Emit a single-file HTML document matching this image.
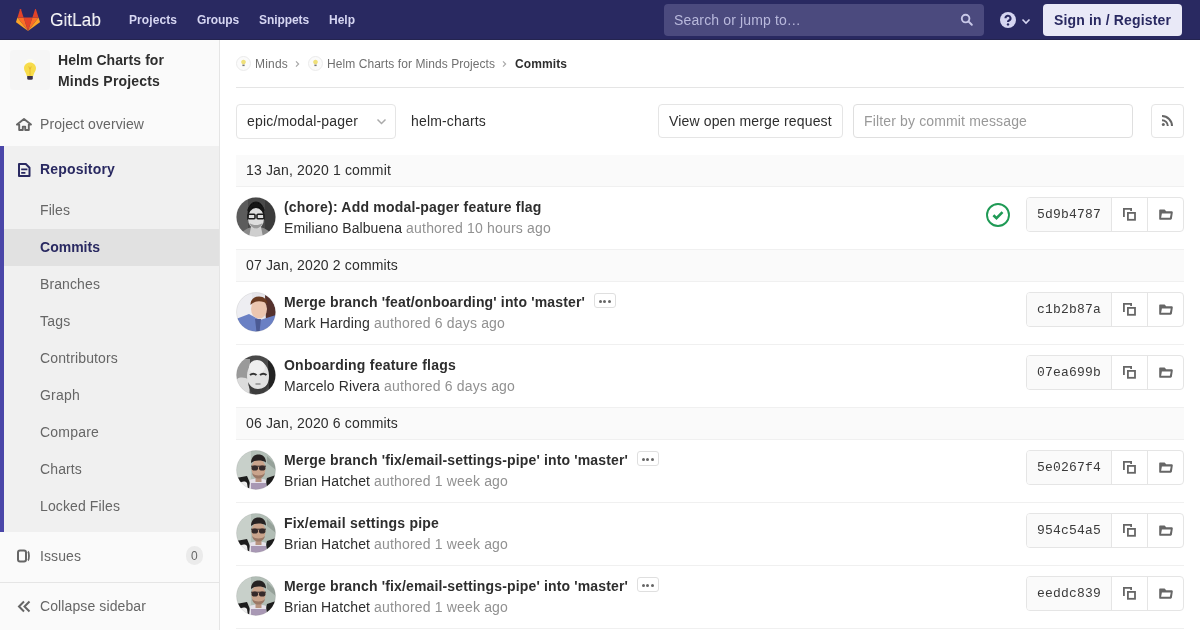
<!DOCTYPE html>
<html><head><meta charset="utf-8">
<style>
*{box-sizing:border-box;margin:0;padding:0}
html,body{width:1200px;height:630px;overflow:hidden;background:#fff;font-family:"Liberation Sans",sans-serif;font-size:14px;color:#2e2e2e}
.t{position:absolute;white-space:nowrap;will-change:transform}
.b{position:absolute}
</style></head><body>

<div class="b" style="left:0;top:0;width:1200px;height:40px;background:#292961"></div>
<div class="b" style="left:0;top:39px;width:1200px;height:1px;background:#24244f"></div>
<svg class="b" style="left:16px;top:9px" width="24" height="22" viewBox="0 0 36 33">
<path fill="#e24329" d="M18 33l6.6-20.3H11.4z"/>
<path fill="#fc6d26" d="M18 33l-6.6-20.3H2.2z"/>
<path fill="#fca326" d="M2.2 12.7L.2 18.9a1.4 1.4 0 0 0 .5 1.5L18 33z"/>
<path fill="#e24329" d="M2.2 12.7h9.2L7.4.4a.7.7 0 0 0-1.3 0z"/>
<path fill="#fc6d26" d="M18 33l6.6-20.3h9.2z"/>
<path fill="#fca326" d="M33.8 12.7l2 6.2a1.4 1.4 0 0 1-.5 1.5L18 33z"/>
<path fill="#e24329" d="M33.8 12.7h-9.2l4-12.3a.7.7 0 0 1 1.3 0z"/>
</svg>
<div class="t" style="left:50px;top:9.5px;font-size:19px;line-height:19px;color:#fff;transform:scaleX(0.91);transform-origin:0 0">GitLab</div>
<div class="t" style="left:129px;top:14px;font-size:12px;line-height:12px;font-weight:bold;color:#d6d6f2;letter-spacing:0.081px;font-family:'Liberation Sans',sans-serif;">Projects</div>
<div class="t" style="left:197px;top:14px;font-size:12px;line-height:12px;font-weight:bold;color:#d6d6f2;letter-spacing:-0.111px;font-family:'Liberation Sans',sans-serif;">Groups</div>
<div class="t" style="left:259px;top:14px;font-size:12px;line-height:12px;font-weight:bold;color:#d6d6f2;letter-spacing:-0.084px;font-family:'Liberation Sans',sans-serif;">Snippets</div>
<div class="t" style="left:329px;top:14px;font-size:12px;line-height:12px;font-weight:bold;color:#d6d6f2;letter-spacing:-0.001px;font-family:'Liberation Sans',sans-serif;">Help</div>
<div class="b" style="left:664px;top:4px;width:320px;height:32px;background:#4b4a7e;border-radius:4px"></div>
<div class="t" style="left:674px;top:13px;font-size:14px;line-height:14px;color:#b9b9dc;letter-spacing:0.139px;font-family:'Liberation Sans',sans-serif;">Search or jump to…</div>
<svg class="b" style="left:960px;top:13px" width="14" height="14" viewBox="0 0 14 14"><circle cx="5.6" cy="5.6" r="3.8" fill="none" stroke="#c8c8e8" stroke-width="1.9"/><path d="M8.4 8.4l3.4 3.4" stroke="#c8c8e8" stroke-width="2" stroke-linecap="round"/></svg>
<svg class="b" style="left:1000px;top:12px" width="16" height="16" viewBox="0 0 16 16"><circle cx="8" cy="8" r="8" fill="#d6d6f2"/><path d="M5.5 6.3a2.5 2.5 0 1 1 3.5 2.2c-.7.4-1 .7-1 1.6" fill="none" stroke="#292961" stroke-width="2.1"/><circle cx="8" cy="12.4" r="1.2" fill="#292961"/></svg>
<svg class="b" style="left:1020.5px;top:17.5px" width="10" height="7" viewBox="0 0 10 7"><path d="M1.5 1.5l3.5 3.5 3.5-3.5" fill="none" stroke="#d6d6f2" stroke-width="1.6"/></svg>
<div class="b" style="left:1043px;top:4px;width:139px;height:32px;background:#e9e9f7;border-radius:4px"></div>
<div class="t" style="left:1054px;top:13px;font-size:14px;line-height:14px;font-weight:bold;color:#292961;letter-spacing:0.147px;font-family:'Liberation Sans',sans-serif;">Sign in / Register</div>
<div class="b" style="left:0;top:40px;width:220px;height:590px;background:#fafafa;border-right:1px solid #e5e5e5"></div>
<div class="b" style="left:10px;top:50px;width:40px;height:40px;background:#f6f6f6;border-radius:4px"></div>
<svg class="b" style="left:22px;top:58px" width="16" height="24" viewBox="0 0 16 24"><ellipse cx="8" cy="4" rx="5" ry="3" fill="#fdfdf0"/><path d="M8 4.5C4.6 4.5 2 7 2 10.2c0 2.6 1.7 4 2.4 6.5l.4 1.3h6.4l.4-1.3c.7-2.5 2.4-3.9 2.4-6.5C14 7 11.4 4.5 8 4.5z" fill="#f7dc4a"/><path d="M6.8 8.5l1.2 3 1.2-3M8 11.5v6" stroke="#e8b830" stroke-width="1" fill="none"/><path d="M5.2 18h5.6v2.6c0 .8-.6 1.2-1.3 1.2H6.5c-.7 0-1.3-.4-1.3-1.2z" fill="#3a3248"/></svg>
<div class="t" style="left:58px;top:53px;font-size:14px;line-height:14px;font-weight:bold;color:#2e2e2e;letter-spacing:0.065px;font-family:'Liberation Sans',sans-serif;">Helm Charts for</div>
<div class="t" style="left:58px;top:74px;font-size:14px;line-height:14px;font-weight:bold;color:#2e2e2e;letter-spacing:0.173px;font-family:'Liberation Sans',sans-serif;">Minds Projects</div>
<svg class="b" style="left:16px;top:118px" width="16" height="13" viewBox="0 0 16 13"><path d="M8 1L1 6.6h2.2V12h3.6V8.6h2.4V12h3.6V6.6H15z" fill="none" stroke="#666" stroke-width="1.9" stroke-linejoin="round"/></svg>
<div class="t" style="left:40px;top:117px;font-size:14px;line-height:14px;color:#666;letter-spacing:0.081px;font-family:'Liberation Sans',sans-serif;">Project overview</div>
<div class="b" style="left:0;top:146px;width:219px;height:386px;background:#f0f0f0"></div>
<div class="b" style="left:0;top:146px;width:4px;height:386px;background:#4a46a8"></div>
<div class="b" style="left:4px;top:229px;width:215px;height:37px;background:#e1e1e1"></div>
<svg class="b" style="left:18px;top:163px" width="13" height="14" viewBox="0 0 13 14"><path d="M1 1h6.8L11.5 4.7V13H1z" fill="none" stroke="#292961" stroke-width="2" stroke-linejoin="round"/><path d="M3.2 6.4h6.2M3.2 9.8h4.2" stroke="#292961" stroke-width="1.8"/></svg>
<div class="t" style="left:40px;top:162px;font-size:14px;line-height:14px;font-weight:bold;color:#292961;letter-spacing:0.188px;font-family:'Liberation Sans',sans-serif;">Repository</div>
<div class="t" style="left:40px;top:203px;font-size:14px;line-height:14px;color:#666;letter-spacing:0.088px;font-family:'Liberation Sans',sans-serif;">Files</div>
<div class="t" style="left:40px;top:240px;font-size:14px;line-height:14px;font-weight:bold;color:#292961;letter-spacing:0.015px;font-family:'Liberation Sans',sans-serif;">Commits</div>
<div class="t" style="left:40px;top:277px;font-size:14px;line-height:14px;color:#666;letter-spacing:0.107px;font-family:'Liberation Sans',sans-serif;">Branches</div>
<div class="t" style="left:40px;top:314px;font-size:14px;line-height:14px;color:#666;letter-spacing:0.219px;font-family:'Liberation Sans',sans-serif;">Tags</div>
<div class="t" style="left:40px;top:351px;font-size:14px;line-height:14px;color:#666;letter-spacing:0.145px;font-family:'Liberation Sans',sans-serif;">Contributors</div>
<div class="t" style="left:40px;top:388px;font-size:14px;line-height:14px;color:#666;letter-spacing:0.218px;font-family:'Liberation Sans',sans-serif;">Graph</div>
<div class="t" style="left:40px;top:425px;font-size:14px;line-height:14px;color:#666;letter-spacing:0.203px;font-family:'Liberation Sans',sans-serif;">Compare</div>
<div class="t" style="left:40px;top:462px;font-size:14px;line-height:14px;color:#666;letter-spacing:0.128px;font-family:'Liberation Sans',sans-serif;">Charts</div>
<div class="t" style="left:40px;top:499px;font-size:14px;line-height:14px;color:#666;letter-spacing:0.117px;font-family:'Liberation Sans',sans-serif;">Locked Files</div>
<svg class="b" style="left:17px;top:549px" width="14" height="14" viewBox="0 0 14 14"><rect x="1" y="1.5" width="8" height="11" rx="2" fill="none" stroke="#666" stroke-width="2"/><path d="M11 2.5c1.3 1.2 1.3 7.8 0 9" fill="none" stroke="#666" stroke-width="1.8"/></svg>
<div class="t" style="left:40px;top:549px;font-size:14px;line-height:14px;color:#666;letter-spacing:0.090px;font-family:'Liberation Sans',sans-serif;">Issues</div>
<div class="b" style="left:186px;top:546px;width:17px;height:19px;background:#ebebeb;border-radius:9px"></div>
<div class="t" style="left:191px;top:550px;font-size:12px;line-height:12px;color:#666;letter-spacing:0.326px;font-family:'Liberation Sans',sans-serif;">0</div>
<div class="b" style="left:0;top:582px;width:219px;height:1px;background:#e5e5e5"></div>
<svg class="b" style="left:17px;top:600px" width="14" height="13" viewBox="0 0 14 13"><path d="M7 1.5L2 6.5l5 5M12.5 1.5l-5 5 5 5" fill="none" stroke="#666" stroke-width="2"/></svg>
<div class="t" style="left:40px;top:599px;font-size:14px;line-height:14px;color:#666;letter-spacing:0.107px;font-family:'Liberation Sans',sans-serif;">Collapse sidebar</div>
<svg class="b" style="left:236px;top:56px" width="15" height="15" viewBox="0 0 15 15"><circle cx="7.5" cy="7.5" r="7" fill="#fbfbfb" stroke="#ebebeb" stroke-width="1"/><path d="M7.5 3.8c-1.4 0-2.3 1-2.3 2.1 0 1 .7 1.5 1 2.4h2.6c.3-.9 1-1.4 1-2.4 0-1.1-.9-2.1-2.3-2.1z" fill="#efe07a"/><path d="M6.4 8.6h2.2v1.5H6.4z" fill="#777"/></svg>
<div class="t" style="left:255px;top:58px;font-size:12px;line-height:12px;color:#707070;letter-spacing:0.198px;font-family:'Liberation Sans',sans-serif;">Minds</div>
<svg class="b" style="left:294px;top:60px" width="7" height="8" viewBox="0 0 7 8"><path d="M2 1.4l2.6 2.6-2.6 2.6" fill="none" stroke="#a8a8a8" stroke-width="1.2"/></svg>
<svg class="b" style="left:308px;top:56px" width="15" height="15" viewBox="0 0 15 15"><circle cx="7.5" cy="7.5" r="7" fill="#fbfbfb" stroke="#ebebeb" stroke-width="1"/><path d="M7.5 3.8c-1.4 0-2.3 1-2.3 2.1 0 1 .7 1.5 1 2.4h2.6c.3-.9 1-1.4 1-2.4 0-1.1-.9-2.1-2.3-2.1z" fill="#efe07a"/><path d="M6.4 8.6h2.2v1.5H6.4z" fill="#777"/></svg>
<div class="t" style="left:327px;top:58px;font-size:12px;line-height:12px;color:#707070;letter-spacing:0.065px;font-family:'Liberation Sans',sans-serif;">Helm Charts for Minds Projects</div>
<svg class="b" style="left:501px;top:60px" width="7" height="8" viewBox="0 0 7 8"><path d="M2 1.4l2.6 2.6-2.6 2.6" fill="none" stroke="#a8a8a8" stroke-width="1.2"/></svg>
<div class="t" style="left:515px;top:58px;font-size:12px;line-height:12px;font-weight:bold;color:#2e2e2e;letter-spacing:0.094px;font-family:'Liberation Sans',sans-serif;">Commits</div>
<div class="b" style="left:236px;top:87px;width:948px;height:1px;background:#e5e5e5"></div>
<div class="b" style="left:236px;top:104px;width:160px;height:35px;border:1px solid #e5e5e5;border-radius:4px;background:#fff"></div>
<div class="t" style="left:247px;top:114px;font-size:14px;line-height:14px;color:#2e2e2e;letter-spacing:0.177px;font-family:'Liberation Sans',sans-serif;">epic/modal-pager</div>
<svg class="b" style="left:376px;top:118px" width="11" height="8" viewBox="0 0 11 8"><path d="M1.5 1.5l4 4 4-4" fill="none" stroke="#aaa" stroke-width="1.5"/></svg>
<div class="t" style="left:411px;top:114px;font-size:14px;line-height:14px;color:#2e2e2e;letter-spacing:0.170px;font-family:'Liberation Sans',sans-serif;">helm-charts</div>
<div class="b" style="left:658px;top:104px;width:185px;height:34px;border:1px solid #e5e5e5;border-radius:4px;background:#fff"></div>
<div class="t" style="left:669px;top:114px;font-size:14px;line-height:14px;color:#2e2e2e;letter-spacing:0.151px;font-family:'Liberation Sans',sans-serif;">View open merge request</div>
<div class="b" style="left:853px;top:104px;width:280px;height:34px;border:1px solid #dfdfdf;border-radius:4px;background:#fff"></div>
<div class="t" style="left:864px;top:114px;font-size:14px;line-height:14px;color:#999;letter-spacing:0.147px;font-family:'Liberation Sans',sans-serif;">Filter by commit message</div>
<div class="b" style="left:1151px;top:104px;width:33px;height:34px;border:1px solid #e5e5e5;border-radius:4px;background:#fff"></div>
<svg class="b" style="left:1161px;top:115px" width="12" height="12" viewBox="0 0 12 12"><circle cx="2.3" cy="9.6" r="1.5" fill="#666"/><path d="M1 5.2a5.8 5.8 0 0 1 5.8 5.8M1 1a10 10 0 0 1 10 10" fill="none" stroke="#666" stroke-width="2"/></svg>
<div class="b" style="left:236px;top:155px;width:948px;height:32px;background:#fafafa;border-bottom:1px solid #f0f0f0"></div><div class="t" style="left:246px;top:163px;font-size:14px;line-height:14px;color:#2e2e2e;letter-spacing:0.160px;font-family:'Liberation Sans',sans-serif;">13 Jan, 2020 1 commit</div>
<div class="b" style="left:236px;top:249px;width:948px;height:1px;background:#f0f0f0"></div><svg class="b" style="left:236px;top:197px" width="40" height="40" viewBox="0 0 40 40"><defs><clipPath id="c236_197"><circle cx="20" cy="20" r="19.5"/></clipPath><filter id="fc236_197"><feGaussianBlur stdDeviation="0.7"/></filter></defs><g clip-path="url(#c236_197)"><g filter="url(#fc236_197)"><rect width="40" height="40" fill="#4a4a4a"/><rect x="0" y="0" width="12" height="40" fill="#5c5c5c"/><rect x="29" y="0" width="11" height="40" fill="#3a3a3a"/><path d="M4 40c2-7 8-10 16-10s14 3 16 10z" fill="#8a8a8a"/><path d="M15 30h10l2 10H13z" fill="#cfcfcf"/><path d="M11.5 18c0-9 4-13.5 8.5-13.5s8.5 4.5 8.5 13.5v5h-17z" fill="#141414"/><ellipse cx="20" cy="21.5" rx="8" ry="10.5" fill="#dedede"/><path d="M11 14c2-6.5 5.5-8.5 9-8.5s7 2 9 8.5c-2.5-2.5-5.5-3.5-9-3.5s-6.5 1-9 3.5z" fill="#121212"/><rect x="12" y="17.2" width="7" height="4.6" rx="1" fill="none" stroke="#1e1e1e" stroke-width="1.6"/><rect x="21" y="17.2" width="7" height="4.6" rx="1" fill="none" stroke="#1e1e1e" stroke-width="1.6"/><path d="M13.5 26c1.5 4 4 5.5 6.5 5.5s5-1.5 6.5-5.5c-2 1.5-4 2-6.5 2s-4.5-.5-6.5-2z" fill="#9a9a9a"/></g></g><circle cx="20" cy="20" r="19.5" fill="none" stroke="rgba(0,0,0,.08)"/></svg><div class="t" style="left:284px;top:200px;font-size:14px;line-height:14px;font-weight:bold;color:#2e2e2e;letter-spacing:0.204px;font-family:'Liberation Sans',sans-serif;">(chore): Add modal-pager feature flag</div><div class="t" style="left:284px;top:221px;font-size:14px;line-height:14px"><span style="letter-spacing:0.074px;color:#2e2e2e;">Emiliano Balbuena</span><span style="letter-spacing:0.192px;color:#919191;"> authored 10 hours ago</span></div><svg class="b" style="left:986px;top:203px" width="24" height="24" viewBox="0 0 24 24"><circle cx="12" cy="12" r="11" fill="none" stroke="#1f9a55" stroke-width="1.9"/><path d="M7.4 12.2l3.1 3 6-6" fill="none" stroke="#1f9a55" stroke-width="2.6"/></svg><div class="b" style="left:1026px;top:197px;width:158px;height:35px;border:1px solid #e5e5e5;border-radius:4px;background:#fff;overflow:hidden"><div class="b" style="left:0;top:0;width:85px;height:33px;background:#fafafa;border-right:1px solid #e5e5e5"></div><div class="b" style="left:120px;top:0;width:1px;height:33px;background:#e5e5e5"></div></div><div class="t" style="left:1037px;top:208px;font-size:13px;line-height:13px;color:#3a3a3a;letter-spacing:0.199px;font-family:'Liberation Mono',monospace;">5d9b4787</div><svg class="b" style="left:1123px;top:208px" width="14" height="14" viewBox="0 0 14 14"><path d="M0.9 9V0.9H8.1V3" fill="none" stroke="#666" stroke-width="1.8"/><rect x="4.9" y="4.9" width="7.1" height="6.9" fill="none" stroke="#666" stroke-width="1.8"/></svg><svg class="b" style="left:1159px;top:209px" width="14" height="11" viewBox="0 0 14 11"><path d="M1.2 0.4H5.6L7.2 2.3H12.6C13.4 2.3 13.9 2.9 13.8 3.6L12.9 9.6C12.8 10.3 12.3 10.7 11.6 10.7H1.2C0.6 10.7 0.2 10.3 0.2 9.7V1.4C0.2 0.8 0.6 0.4 1.2 0.4z" fill="#666"/><path d="M2.9 4.5H11.7L10.9 8.8H2.1z" fill="#fff"/></svg>
<div class="b" style="left:236px;top:250px;width:948px;height:32px;background:#fafafa;border-bottom:1px solid #f0f0f0"></div><div class="t" style="left:246px;top:258px;font-size:14px;line-height:14px;color:#2e2e2e;letter-spacing:0.153px;font-family:'Liberation Sans',sans-serif;">07 Jan, 2020 2 commits</div>
<div class="b" style="left:236px;top:344px;width:948px;height:1px;background:#f0f0f0"></div><svg class="b" style="left:236px;top:292px" width="40" height="40" viewBox="0 0 40 40"><defs><clipPath id="c236_292"><circle cx="20" cy="20" r="19.5"/></clipPath><filter id="fc236_292"><feGaussianBlur stdDeviation="0.7"/></filter></defs><g clip-path="url(#c236_292)"><g filter="url(#fc236_292)"><rect width="40" height="40" fill="#e6e5ea"/><rect x="0" y="0" width="16" height="40" fill="#eeeef2"/><path d="M29 3c6 3 10 9 11 17v14l-10-4z" fill="#54302e"/><path d="M0 27l13-5 11 6 16-5v17H0z" fill="#6b80c4"/><path d="M19 27h6l-1.5 13h-3z" fill="#4c5a94"/><ellipse cx="23" cy="17" rx="8" ry="9.5" fill="#ebc6b0"/><path d="M14.5 13c0-5.5 3.5-8.5 8.5-8.5s8.5 3 8.5 8c-2.2-2.2-5.2-3.2-8.5-3.2s-6.3 1.4-8.5 3.7z" fill="#6a3a22"/></g></g><circle cx="20" cy="20" r="19.5" fill="none" stroke="rgba(0,0,0,.08)"/></svg><div class="t" style="left:284px;top:295px;font-size:14px;line-height:14px;font-weight:bold;color:#2e2e2e;letter-spacing:0.156px;font-family:'Liberation Sans',sans-serif;">Merge branch &#x27;feat/onboarding&#x27; into &#x27;master&#x27;</div><div class="t" style="left:284px;top:316px;font-size:14px;line-height:14px"><span style="letter-spacing:0.164px;color:#2e2e2e;">Mark Harding</span><span style="letter-spacing:0.173px;color:#919191;"> authored 6 days ago</span></div><div class="b" style="left:594px;top:293px;width:22px;height:15px;border:1px solid #dfdfdf;border-radius:3px;background:#fff"></div><div class="b" style="left:598.5px;top:299.5px;width:3px;height:3px;border-radius:50%;background:#666"></div><div class="b" style="left:603.0px;top:299.5px;width:3px;height:3px;border-radius:50%;background:#666"></div><div class="b" style="left:607.5px;top:299.5px;width:3px;height:3px;border-radius:50%;background:#666"></div><div class="b" style="left:1026px;top:292px;width:158px;height:35px;border:1px solid #e5e5e5;border-radius:4px;background:#fff;overflow:hidden"><div class="b" style="left:0;top:0;width:85px;height:33px;background:#fafafa;border-right:1px solid #e5e5e5"></div><div class="b" style="left:120px;top:0;width:1px;height:33px;background:#e5e5e5"></div></div><div class="t" style="left:1037px;top:303px;font-size:13px;line-height:13px;color:#3a3a3a;letter-spacing:0.199px;font-family:'Liberation Mono',monospace;">c1b2b87a</div><svg class="b" style="left:1123px;top:303px" width="14" height="14" viewBox="0 0 14 14"><path d="M0.9 9V0.9H8.1V3" fill="none" stroke="#666" stroke-width="1.8"/><rect x="4.9" y="4.9" width="7.1" height="6.9" fill="none" stroke="#666" stroke-width="1.8"/></svg><svg class="b" style="left:1159px;top:304px" width="14" height="11" viewBox="0 0 14 11"><path d="M1.2 0.4H5.6L7.2 2.3H12.6C13.4 2.3 13.9 2.9 13.8 3.6L12.9 9.6C12.8 10.3 12.3 10.7 11.6 10.7H1.2C0.6 10.7 0.2 10.3 0.2 9.7V1.4C0.2 0.8 0.6 0.4 1.2 0.4z" fill="#666"/><path d="M2.9 4.5H11.7L10.9 8.8H2.1z" fill="#fff"/></svg>
<div class="b" style="left:236px;top:407px;width:948px;height:1px;background:#f0f0f0"></div><svg class="b" style="left:236px;top:355px" width="40" height="40" viewBox="0 0 40 40"><defs><clipPath id="c236_355"><circle cx="20" cy="20" r="19.5"/></clipPath><filter id="fc236_355"><feGaussianBlur stdDeviation="0.7"/></filter></defs><g clip-path="url(#c236_355)"><g filter="url(#fc236_355)"><rect width="40" height="40" fill="#4a4a4a"/><path d="M0 4h14v36H0z" fill="#9a9a9a"/><path d="M1 24c3-2 8-2 12 1v15H1z" fill="#dcdcdc"/><path d="M32 4c5 4 8 12 8 20v16h-7z" fill="#222"/><ellipse cx="22" cy="21" rx="11" ry="15" fill="#e2e2e2"/><ellipse cx="21" cy="12" rx="8" ry="7" fill="#efefef"/><path d="M12 27c1 9 5 13 10 13s9-4 11-13c-2 4-6 7-11 7s-8-3-10-7z" fill="#3c3c3c"/><path d="M14 20c2-1.6 4.5-1.6 6.5 0M24 20c2-1.6 4.5-1.6 6.5 0" stroke="#333" stroke-width="2" fill="none"/><path d="M19.5 29h5" stroke="#888" stroke-width="1.4"/></g></g><circle cx="20" cy="20" r="19.5" fill="none" stroke="rgba(0,0,0,.08)"/></svg><div class="t" style="left:284px;top:358px;font-size:14px;line-height:14px;font-weight:bold;color:#2e2e2e;letter-spacing:0.231px;font-family:'Liberation Sans',sans-serif;">Onboarding feature flags</div><div class="t" style="left:284px;top:379px;font-size:14px;line-height:14px"><span style="letter-spacing:0.133px;color:#2e2e2e;">Marcelo Rivera</span><span style="letter-spacing:0.173px;color:#919191;"> authored 6 days ago</span></div><div class="b" style="left:1026px;top:355px;width:158px;height:35px;border:1px solid #e5e5e5;border-radius:4px;background:#fff;overflow:hidden"><div class="b" style="left:0;top:0;width:85px;height:33px;background:#fafafa;border-right:1px solid #e5e5e5"></div><div class="b" style="left:120px;top:0;width:1px;height:33px;background:#e5e5e5"></div></div><div class="t" style="left:1037px;top:366px;font-size:13px;line-height:13px;color:#3a3a3a;letter-spacing:0.199px;font-family:'Liberation Mono',monospace;">07ea699b</div><svg class="b" style="left:1123px;top:366px" width="14" height="14" viewBox="0 0 14 14"><path d="M0.9 9V0.9H8.1V3" fill="none" stroke="#666" stroke-width="1.8"/><rect x="4.9" y="4.9" width="7.1" height="6.9" fill="none" stroke="#666" stroke-width="1.8"/></svg><svg class="b" style="left:1159px;top:367px" width="14" height="11" viewBox="0 0 14 11"><path d="M1.2 0.4H5.6L7.2 2.3H12.6C13.4 2.3 13.9 2.9 13.8 3.6L12.9 9.6C12.8 10.3 12.3 10.7 11.6 10.7H1.2C0.6 10.7 0.2 10.3 0.2 9.7V1.4C0.2 0.8 0.6 0.4 1.2 0.4z" fill="#666"/><path d="M2.9 4.5H11.7L10.9 8.8H2.1z" fill="#fff"/></svg>
<div class="b" style="left:236px;top:408px;width:948px;height:32px;background:#fafafa;border-bottom:1px solid #f0f0f0"></div><div class="t" style="left:246px;top:416px;font-size:14px;line-height:14px;color:#2e2e2e;letter-spacing:0.153px;font-family:'Liberation Sans',sans-serif;">06 Jan, 2020 6 commits</div>
<div class="b" style="left:236px;top:502px;width:948px;height:1px;background:#f0f0f0"></div><svg class="b" style="left:236px;top:450px" width="40" height="40" viewBox="0 0 40 40"><defs><clipPath id="c236_450"><circle cx="20" cy="20" r="19.5"/></clipPath><filter id="fc236_450"><feGaussianBlur stdDeviation="0.7"/></filter></defs><g clip-path="url(#c236_450)"><g filter="url(#fc236_450)"><rect width="40" height="40" fill="#b2beb6"/><rect x="0" y="0" width="15" height="40" fill="#c8d0ca"/><path d="M31 6l9 9v5l-9-7z" fill="#96a29a"/><path d="M0 28l11-2 6 14H0z" fill="#1c1c1c"/><path d="M3 34c3-3 6-3 8-1l1 7H3z" fill="#eeeeee"/><path d="M40 25l-9 3-3 12h12z" fill="#1c1c1c"/><path d="M14 30c4-2 11-2 16 0l1 10H13z" fill="#e6e2ea"/><path d="M15 33h15v7H15z" fill="#a898b4"/><rect x="19.5" y="25" width="6" height="7" fill="#b89480"/><ellipse cx="22.5" cy="18.5" rx="7" ry="9.5" fill="#caa48c"/><path d="M16 23c1 4 3.5 5.5 6.5 5.5s5.5-1.5 6.5-5.5c-2 1.8-4 2.5-6.5 2.5s-4.5-.7-6.5-2.5z" fill="#9a7866"/><path d="M15 13c0-6 3.5-8.5 7.5-8.5s7.5 2.5 7.5 8c-2-1.5-4.5-2-7.5-2s-5.5.8-7.5 2.5z" fill="#262120"/><ellipse cx="18.8" cy="18" rx="3.3" ry="2.6" fill="#352a2a"/><ellipse cx="26.2" cy="18" rx="3.3" ry="2.6" fill="#352a2a"/><path d="M15 16.2h15" stroke="#352a2a" stroke-width="1"/></g></g><circle cx="20" cy="20" r="19.5" fill="none" stroke="rgba(0,0,0,.08)"/></svg><div class="t" style="left:284px;top:453px;font-size:14px;line-height:14px;font-weight:bold;color:#2e2e2e;letter-spacing:0.151px;font-family:'Liberation Sans',sans-serif;">Merge branch &#x27;fix/email-settings-pipe&#x27; into &#x27;master&#x27;</div><div class="t" style="left:284px;top:474px;font-size:14px;line-height:14px"><span style="letter-spacing:0.091px;color:#2e2e2e;">Brian Hatchet</span><span style="letter-spacing:0.167px;color:#919191;"> authored 1 week ago</span></div><div class="b" style="left:637px;top:451px;width:22px;height:15px;border:1px solid #dfdfdf;border-radius:3px;background:#fff"></div><div class="b" style="left:641.5px;top:457.5px;width:3px;height:3px;border-radius:50%;background:#666"></div><div class="b" style="left:646.0px;top:457.5px;width:3px;height:3px;border-radius:50%;background:#666"></div><div class="b" style="left:650.5px;top:457.5px;width:3px;height:3px;border-radius:50%;background:#666"></div><div class="b" style="left:1026px;top:450px;width:158px;height:35px;border:1px solid #e5e5e5;border-radius:4px;background:#fff;overflow:hidden"><div class="b" style="left:0;top:0;width:85px;height:33px;background:#fafafa;border-right:1px solid #e5e5e5"></div><div class="b" style="left:120px;top:0;width:1px;height:33px;background:#e5e5e5"></div></div><div class="t" style="left:1037px;top:461px;font-size:13px;line-height:13px;color:#3a3a3a;letter-spacing:0.199px;font-family:'Liberation Mono',monospace;">5e0267f4</div><svg class="b" style="left:1123px;top:461px" width="14" height="14" viewBox="0 0 14 14"><path d="M0.9 9V0.9H8.1V3" fill="none" stroke="#666" stroke-width="1.8"/><rect x="4.9" y="4.9" width="7.1" height="6.9" fill="none" stroke="#666" stroke-width="1.8"/></svg><svg class="b" style="left:1159px;top:462px" width="14" height="11" viewBox="0 0 14 11"><path d="M1.2 0.4H5.6L7.2 2.3H12.6C13.4 2.3 13.9 2.9 13.8 3.6L12.9 9.6C12.8 10.3 12.3 10.7 11.6 10.7H1.2C0.6 10.7 0.2 10.3 0.2 9.7V1.4C0.2 0.8 0.6 0.4 1.2 0.4z" fill="#666"/><path d="M2.9 4.5H11.7L10.9 8.8H2.1z" fill="#fff"/></svg>
<div class="b" style="left:236px;top:565px;width:948px;height:1px;background:#f0f0f0"></div><svg class="b" style="left:236px;top:513px" width="40" height="40" viewBox="0 0 40 40"><defs><clipPath id="c236_513"><circle cx="20" cy="20" r="19.5"/></clipPath><filter id="fc236_513"><feGaussianBlur stdDeviation="0.7"/></filter></defs><g clip-path="url(#c236_513)"><g filter="url(#fc236_513)"><rect width="40" height="40" fill="#b2beb6"/><rect x="0" y="0" width="15" height="40" fill="#c8d0ca"/><path d="M31 6l9 9v5l-9-7z" fill="#96a29a"/><path d="M0 28l11-2 6 14H0z" fill="#1c1c1c"/><path d="M3 34c3-3 6-3 8-1l1 7H3z" fill="#eeeeee"/><path d="M40 25l-9 3-3 12h12z" fill="#1c1c1c"/><path d="M14 30c4-2 11-2 16 0l1 10H13z" fill="#e6e2ea"/><path d="M15 33h15v7H15z" fill="#a898b4"/><rect x="19.5" y="25" width="6" height="7" fill="#b89480"/><ellipse cx="22.5" cy="18.5" rx="7" ry="9.5" fill="#caa48c"/><path d="M16 23c1 4 3.5 5.5 6.5 5.5s5.5-1.5 6.5-5.5c-2 1.8-4 2.5-6.5 2.5s-4.5-.7-6.5-2.5z" fill="#9a7866"/><path d="M15 13c0-6 3.5-8.5 7.5-8.5s7.5 2.5 7.5 8c-2-1.5-4.5-2-7.5-2s-5.5.8-7.5 2.5z" fill="#262120"/><ellipse cx="18.8" cy="18" rx="3.3" ry="2.6" fill="#352a2a"/><ellipse cx="26.2" cy="18" rx="3.3" ry="2.6" fill="#352a2a"/><path d="M15 16.2h15" stroke="#352a2a" stroke-width="1"/></g></g><circle cx="20" cy="20" r="19.5" fill="none" stroke="rgba(0,0,0,.08)"/></svg><div class="t" style="left:284px;top:516px;font-size:14px;line-height:14px;font-weight:bold;color:#2e2e2e;letter-spacing:0.211px;font-family:'Liberation Sans',sans-serif;">Fix/email settings pipe</div><div class="t" style="left:284px;top:537px;font-size:14px;line-height:14px"><span style="letter-spacing:0.091px;color:#2e2e2e;">Brian Hatchet</span><span style="letter-spacing:0.167px;color:#919191;"> authored 1 week ago</span></div><div class="b" style="left:1026px;top:513px;width:158px;height:35px;border:1px solid #e5e5e5;border-radius:4px;background:#fff;overflow:hidden"><div class="b" style="left:0;top:0;width:85px;height:33px;background:#fafafa;border-right:1px solid #e5e5e5"></div><div class="b" style="left:120px;top:0;width:1px;height:33px;background:#e5e5e5"></div></div><div class="t" style="left:1037px;top:524px;font-size:13px;line-height:13px;color:#3a3a3a;letter-spacing:0.199px;font-family:'Liberation Mono',monospace;">954c54a5</div><svg class="b" style="left:1123px;top:524px" width="14" height="14" viewBox="0 0 14 14"><path d="M0.9 9V0.9H8.1V3" fill="none" stroke="#666" stroke-width="1.8"/><rect x="4.9" y="4.9" width="7.1" height="6.9" fill="none" stroke="#666" stroke-width="1.8"/></svg><svg class="b" style="left:1159px;top:525px" width="14" height="11" viewBox="0 0 14 11"><path d="M1.2 0.4H5.6L7.2 2.3H12.6C13.4 2.3 13.9 2.9 13.8 3.6L12.9 9.6C12.8 10.3 12.3 10.7 11.6 10.7H1.2C0.6 10.7 0.2 10.3 0.2 9.7V1.4C0.2 0.8 0.6 0.4 1.2 0.4z" fill="#666"/><path d="M2.9 4.5H11.7L10.9 8.8H2.1z" fill="#fff"/></svg>
<div class="b" style="left:236px;top:628px;width:948px;height:1px;background:#f0f0f0"></div><svg class="b" style="left:236px;top:576px" width="40" height="40" viewBox="0 0 40 40"><defs><clipPath id="c236_576"><circle cx="20" cy="20" r="19.5"/></clipPath><filter id="fc236_576"><feGaussianBlur stdDeviation="0.7"/></filter></defs><g clip-path="url(#c236_576)"><g filter="url(#fc236_576)"><rect width="40" height="40" fill="#b2beb6"/><rect x="0" y="0" width="15" height="40" fill="#c8d0ca"/><path d="M31 6l9 9v5l-9-7z" fill="#96a29a"/><path d="M0 28l11-2 6 14H0z" fill="#1c1c1c"/><path d="M3 34c3-3 6-3 8-1l1 7H3z" fill="#eeeeee"/><path d="M40 25l-9 3-3 12h12z" fill="#1c1c1c"/><path d="M14 30c4-2 11-2 16 0l1 10H13z" fill="#e6e2ea"/><path d="M15 33h15v7H15z" fill="#a898b4"/><rect x="19.5" y="25" width="6" height="7" fill="#b89480"/><ellipse cx="22.5" cy="18.5" rx="7" ry="9.5" fill="#caa48c"/><path d="M16 23c1 4 3.5 5.5 6.5 5.5s5.5-1.5 6.5-5.5c-2 1.8-4 2.5-6.5 2.5s-4.5-.7-6.5-2.5z" fill="#9a7866"/><path d="M15 13c0-6 3.5-8.5 7.5-8.5s7.5 2.5 7.5 8c-2-1.5-4.5-2-7.5-2s-5.5.8-7.5 2.5z" fill="#262120"/><ellipse cx="18.8" cy="18" rx="3.3" ry="2.6" fill="#352a2a"/><ellipse cx="26.2" cy="18" rx="3.3" ry="2.6" fill="#352a2a"/><path d="M15 16.2h15" stroke="#352a2a" stroke-width="1"/></g></g><circle cx="20" cy="20" r="19.5" fill="none" stroke="rgba(0,0,0,.08)"/></svg><div class="t" style="left:284px;top:579px;font-size:14px;line-height:14px;font-weight:bold;color:#2e2e2e;letter-spacing:0.151px;font-family:'Liberation Sans',sans-serif;">Merge branch &#x27;fix/email-settings-pipe&#x27; into &#x27;master&#x27;</div><div class="t" style="left:284px;top:600px;font-size:14px;line-height:14px"><span style="letter-spacing:0.091px;color:#2e2e2e;">Brian Hatchet</span><span style="letter-spacing:0.167px;color:#919191;"> authored 1 week ago</span></div><div class="b" style="left:637px;top:577px;width:22px;height:15px;border:1px solid #dfdfdf;border-radius:3px;background:#fff"></div><div class="b" style="left:641.5px;top:583.5px;width:3px;height:3px;border-radius:50%;background:#666"></div><div class="b" style="left:646.0px;top:583.5px;width:3px;height:3px;border-radius:50%;background:#666"></div><div class="b" style="left:650.5px;top:583.5px;width:3px;height:3px;border-radius:50%;background:#666"></div><div class="b" style="left:1026px;top:576px;width:158px;height:35px;border:1px solid #e5e5e5;border-radius:4px;background:#fff;overflow:hidden"><div class="b" style="left:0;top:0;width:85px;height:33px;background:#fafafa;border-right:1px solid #e5e5e5"></div><div class="b" style="left:120px;top:0;width:1px;height:33px;background:#e5e5e5"></div></div><div class="t" style="left:1037px;top:587px;font-size:13px;line-height:13px;color:#3a3a3a;letter-spacing:0.199px;font-family:'Liberation Mono',monospace;">eeddc839</div><svg class="b" style="left:1123px;top:587px" width="14" height="14" viewBox="0 0 14 14"><path d="M0.9 9V0.9H8.1V3" fill="none" stroke="#666" stroke-width="1.8"/><rect x="4.9" y="4.9" width="7.1" height="6.9" fill="none" stroke="#666" stroke-width="1.8"/></svg><svg class="b" style="left:1159px;top:588px" width="14" height="11" viewBox="0 0 14 11"><path d="M1.2 0.4H5.6L7.2 2.3H12.6C13.4 2.3 13.9 2.9 13.8 3.6L12.9 9.6C12.8 10.3 12.3 10.7 11.6 10.7H1.2C0.6 10.7 0.2 10.3 0.2 9.7V1.4C0.2 0.8 0.6 0.4 1.2 0.4z" fill="#666"/><path d="M2.9 4.5H11.7L10.9 8.8H2.1z" fill="#fff"/></svg>
</body></html>
